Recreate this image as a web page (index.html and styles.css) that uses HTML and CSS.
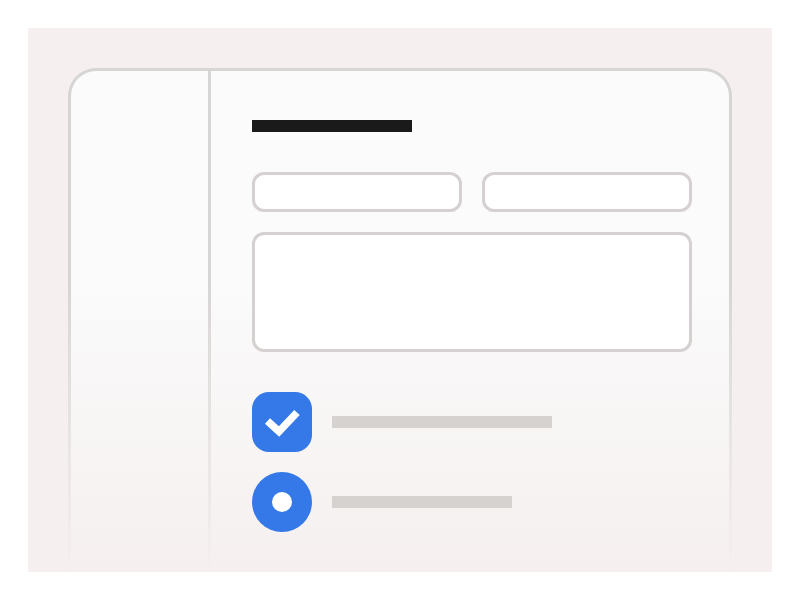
FILE: index.html
```html
<!DOCTYPE html>
<html>
<head>
<meta charset="utf-8">
<link rel="stylesheet" href="styles.css">
</head>
<body>
<div class="panel">
  <div class="card">
    <div class="sidebar"></div>
    <div class="main">
      <div class="title"></div>
      <div class="row">
        <div class="input"></div>
        <div class="input"></div>
      </div>
      <div class="textarea"></div>
      <div class="options">
        <div class="option">
          <div class="checkbox">
            <svg width="60" height="60" viewBox="0 0 60 60"><path d="M15.5 29 L27 39.5 L45 20.5" fill="none" stroke="#fff" stroke-width="7.5" stroke-linejoin="miter" stroke-linecap="butt"/></svg>
          </div>
          <div class="line line-long"></div>
        </div>
        <div class="option">
          <div class="radio"><div class="dot"></div></div>
          <div class="line line-short"></div>
        </div>
      </div>
    </div>
    <div class="fade"></div>
  </div>
</div>
</body>
</html>
```
FILE: styles.css
```css
html, body { margin: 0; padding: 0; background: #ffffff; }
body { padding: 28px; font-family: "Liberation Sans", sans-serif; }
.panel {
  width: 744px;
  height: 544px;
  box-sizing: border-box;
  background: #f5f0ef;
  padding: 40px 40px 0 40px;
  overflow: hidden;
  display: flex;
  flex-direction: column;
}
.card {
  flex: 1;
  position: relative;
  display: flex;
  border: 3px solid #d7d5d4;
  border-bottom: 0;
  border-radius: 28px 28px 0 0;
  background: #fbfbfb;
}
.sidebar {
  width: 137px;
  border-right: 3px solid #d7d5d4;
  flex: none;
}
.main {
  flex: 1;
  padding: 49px 37px 0 41px;
  display: flex;
  flex-direction: column;
  position: relative;
  z-index: 1;
}
.title { width: 160px; height: 12px; background: #1a1a1a; }
.row {
  margin-top: 40px;
  display: grid;
  grid-template-columns: 1fr 1fr;
  gap: 20px;
}
.input, .textarea {
  box-sizing: border-box;
  border: 3px solid #d5d1d0;
  border-radius: 12px;
  background: #ffffff;
}
.input { height: 40px; }
.textarea { margin-top: 20px; height: 120px; }
.options {
  margin-top: 40px;
  display: flex;
  flex-direction: column;
  gap: 20px;
}
.option { display: flex; align-items: center; gap: 20px; }
.checkbox {
  width: 60px; height: 60px;
  border-radius: 17px;
  background: #3479e7;
  flex: none;
}
.checkbox svg { display: block; }
.radio {
  width: 60px; height: 60px;
  border-radius: 50%;
  background: #3479e7;
  display: flex; align-items: center; justify-content: center;
  flex: none;
}
.dot { width: 20px; height: 20px; border-radius: 50%; background: #ffffff; }
.line { height: 12px; background: #d6d2d0; }
.line-long { width: 220px; }
.line-short { width: 180px; }
.fade {
  position: absolute;
  left: -3px; right: -3px; top: -3px; bottom: 0;
  background: linear-gradient(to bottom, rgba(245,240,239,0) 0%, rgba(245,240,239,0) 42%, rgba(245,240,239,0.65) 78%, #f5f0ef 100%);
  pointer-events: none;
}
```
